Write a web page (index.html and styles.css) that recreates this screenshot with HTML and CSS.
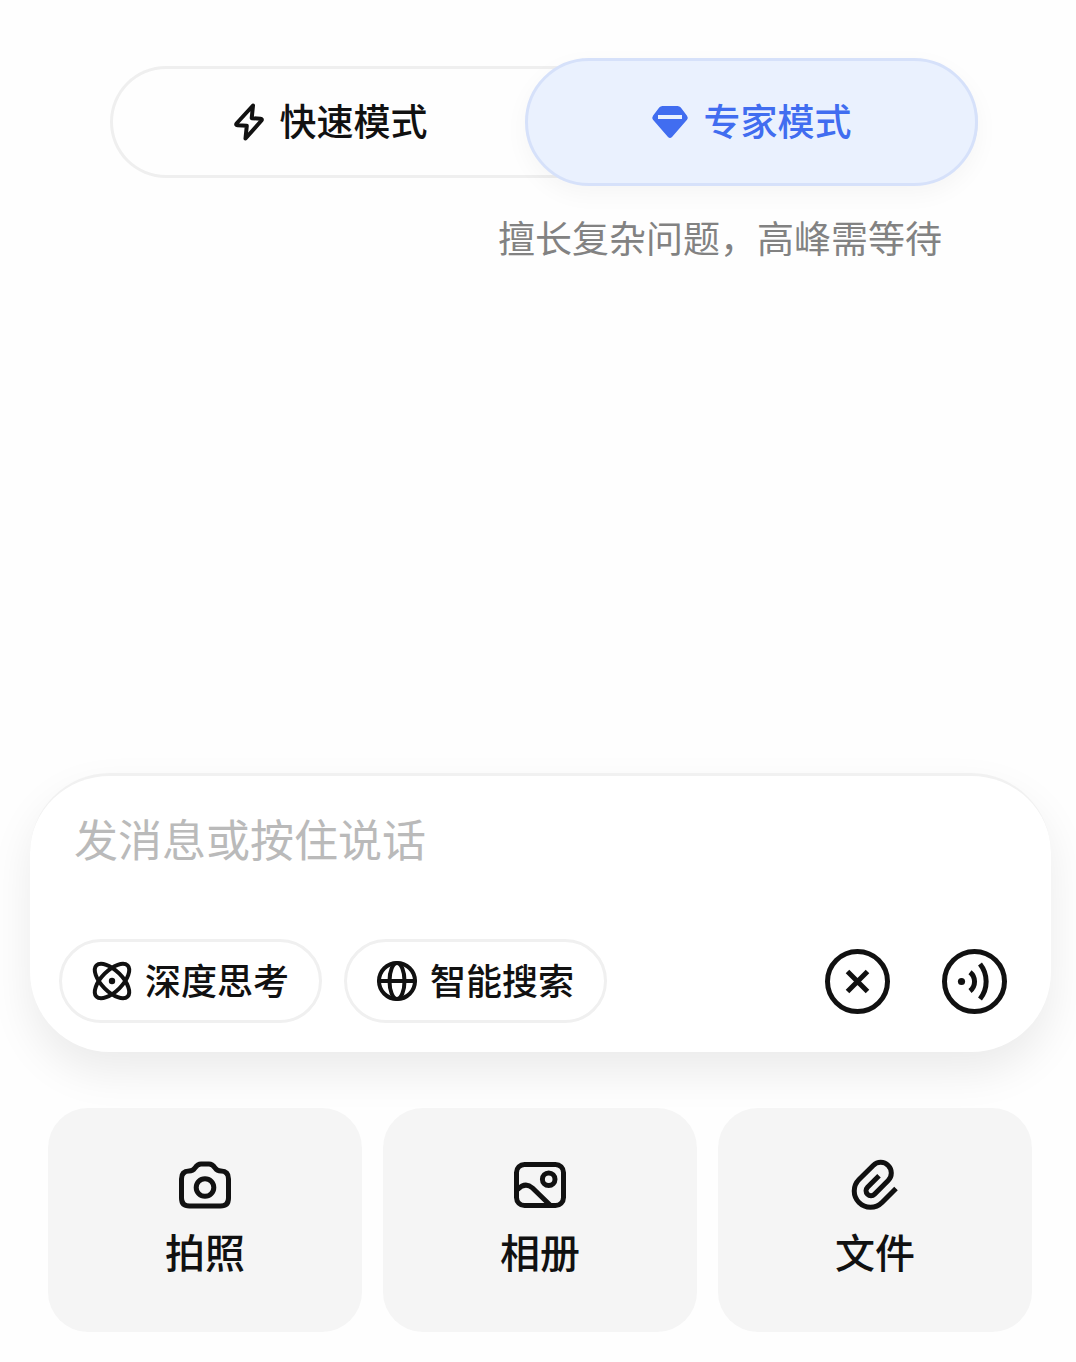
FILE: index.html
```html
<!DOCTYPE html>
<html lang="zh-CN">
  <head>
    <meta charset="utf-8">
    <meta name="viewport" content="width=device-width, initial-scale=1">
    <title>新对话</title>
    <link rel="stylesheet" href="styles.css">
  </head>
  <body>
    <header class="modes">
      <div class="switch">
        <button class="mode" type="button" aria-pressed="false">
          <svg class="line" width="30" height="38" viewBox="0 0 30 38" aria-hidden="true"><path d="M19 2.5L2.5 20.5Q1.5 22 3.5 22.2L12.8 22.8L11.5 35.5L27.5 17.5Q28.5 16 26.5 15.8L17.7 15.2Z"/></svg>
          <span>快速模式</span>
        </button>
        <button class="mode active" type="button" aria-pressed="true">
          <svg width="36" height="32" viewBox="0 0 36 32" aria-hidden="true"><path fill="currentColor" fill-rule="evenodd" d="M10.5 0H25.5Q27.5 0 28.8 1.6L35 9.8Q36.5 12 35 13.8L20 31Q18 33 16 31L1 13.8Q-.5 12 1 9.8L7.2 1.6Q8.5 0 10.5 0ZM6 9V13H30V9Z"/></svg>
          <span>专家模式</span>
        </button>
      </div>
      <p class="hint">擅长复杂问题，高峰需等待</p>
    </header>

    <main class="bottom">
      <form class="composer">
        <textarea class="message" rows="1" aria-label="消息" placeholder="发消息或按住说话"></textarea>
        <div class="tools">
          <button class="chip" type="button">
            <svg class="line" width="40" height="40" viewBox="0 0 40 40" aria-hidden="true"><ellipse cx="20" cy="20" rx="22" ry="10.4" transform="rotate(45 20 20)"/><ellipse cx="20" cy="20" rx="22" ry="10.4" transform="rotate(-45 20 20)"/><circle class="dot" cx="20" cy="20" r="3.2"/></svg>
            <span>深度思考</span>
          </button>
          <button class="chip" type="button">
            <svg class="line" width="40" height="40" viewBox="0 0 40 40" aria-hidden="true"><circle cx="20" cy="20" r="18"/><ellipse cx="20" cy="20" rx="7.5" ry="18"/><path d="M2 20H38"/></svg>
            <span>智能搜索</span>
          </button>
          <button class="round first" type="button" aria-label="关闭">
            <svg class="line thick" width="65" height="65" viewBox="0 0 65 65" aria-hidden="true"><circle cx="32.5" cy="32.5" r="30"/><path stroke-linecap="butt" d="M22.5 22.5L42.5 42.5M42.5 22.5L22.5 42.5"/></svg>
          </button>
          <button class="round" type="button" aria-label="语音">
            <svg class="line thick" width="65" height="65" viewBox="0 0 65 65" aria-hidden="true"><circle cx="32.5" cy="32.5" r="30"/><circle class="dot" cx="19.5" cy="32.5" r="3.6"/><path stroke-linecap="butt" d="M28 23.2A12 12 0 0 1 28 42M38 15A28 28 0 0 1 38 50"/></svg>
          </button>
        </div>
      </form>

      <nav class="attach">
        <button class="card" type="button">
          <svg class="line thick" width="52" height="48" viewBox="0 0 52 48" aria-hidden="true"><path d="M2.5 18Q2.5 10 10 10C13.5 10 14.5 9 16 6.8S19 3 22 3H30C33 3 34.5 4.6 36 6.8S38.5 10 42 10Q49.5 10 49.5 18V37Q49.5 45 41.5 45H10.5Q2.5 45 2.5 37Z"/><circle cx="26" cy="26.5" r="8.8"/></svg>
          <span>拍照</span>
        </button>
        <button class="card" type="button">
          <svg class="line thick" width="52" height="48" viewBox="0 0 52 48" aria-hidden="true"><rect x="2.5" y="3.5" width="47" height="41" rx="8"/><circle cx="34.7" cy="18.3" r="6.3"/><path d="M3.5 28.5C9 23 14 23 18.5 27L36 44"/></svg>
          <span>相册</span>
        </button>
        <button class="card" type="button">
          <svg class="line thick" width="46" height="48" viewBox="0 1 46 48" aria-hidden="true"><path stroke-linecap="butt" d="M44 28.5L30 42.6A16.2 16.2 0 0 1 7 19.6L21.2 5.4A10.6 10.6 0 0 1 36.2 20.4L22.5 34.3A4.9 4.9 0 0 1 15.5 27.3L27 15.8"/></svg>
          <span>文件</span>
        </button>
      </nav>
    </main>
  </body>
</html>
```
FILE: styles.css
```css
* { box-sizing: border-box; }

body {
  display: flex;
  flex-direction: column;
  justify-content: space-between;
  min-height: 100vh;
  margin: 0;
  background: #fefefe;
  color: #111;
  font-family: "Noto Sans CJK SC", sans-serif;
  font-weight: 500;
}

button {
  display: flex;
  align-items: center;
  justify-content: center;
  margin: 0;
  padding: 0;
  border: 0;
  background: none;
  color: inherit;
  font: inherit;
  cursor: pointer;
}

svg { display: block; flex: none; overflow: visible; }

.line   { fill: none; stroke: currentColor; stroke-width: 4; stroke-linejoin: round; stroke-linecap: round; }
.thick  { stroke-width: 5; }
.dot    { fill: currentColor; stroke: none; }

/* mode switch */
.modes  { padding: 66px 98px 0 110px; }
.switch { display: grid; grid-template-columns: 11fr 12fr; height: 112px; border-radius: 56px; box-shadow: inset 0 0 0 3px #efefef; }
.mode   { gap: 16px; padding-left: 26px; font-size: 37px; line-height: 48px; }

.mode span,
.chip span { padding-bottom: 4px; }

.mode.active {
  margin: -8px 0;
  padding: 0;
  border: 3px solid #d6e1fa;
  border-radius: 64px;
  background: #eaf1fe;
  box-shadow: 0 8px 24px rgba(0, 0, 0, 0.04);
  color: #416df0;
}

.hint   { margin: 35px 36px 0 0; color: #828282; font-size: 37px; font-weight: 400; line-height: 48px; text-align: right; }

/* composer */
.bottom { padding-bottom: 30px; }

.composer {
  margin: 0 25px 56px 30px;
  padding: 30px 44px 29px 29px;
  border-top: 3px solid #f1f1f1;
  border-radius: 80px;
  background: #fff;
  box-shadow: 0 20px 44px rgba(0, 0, 0, 0.08);
}

.message {
  display: block;
  width: 100%;
  height: 64px;
  margin: 0 0 69px;
  padding: 0 15px;
  border: 0;
  outline: 0;
  background: none;
  color: inherit;
  font: 400 44px/64px "Noto Sans CJK SC", sans-serif;
  resize: none;
  overflow: hidden;
}

.message::placeholder { color: #bababa; opacity: 1; }

.tools  { display: flex; align-items: center; }
.chip   { gap: 13px; height: 84px; margin-right: 22px; padding: 0 30px; border: 3px solid #f0f0f0; border-radius: 42px; font-size: 36px; line-height: 48px; }
.round  { margin-left: 52px; border-radius: 50%; }
.round.first { margin-left: auto; }

/* attachments */
.attach { display: grid; grid-template-columns: repeat(3, 1fr); gap: 21px; padding: 0 44px 0 48px; }
.card   { flex-direction: column; gap: 14px; height: 224px; border-radius: 40px; background: #f5f5f5; font-size: 40px; line-height: 56px; }
```
